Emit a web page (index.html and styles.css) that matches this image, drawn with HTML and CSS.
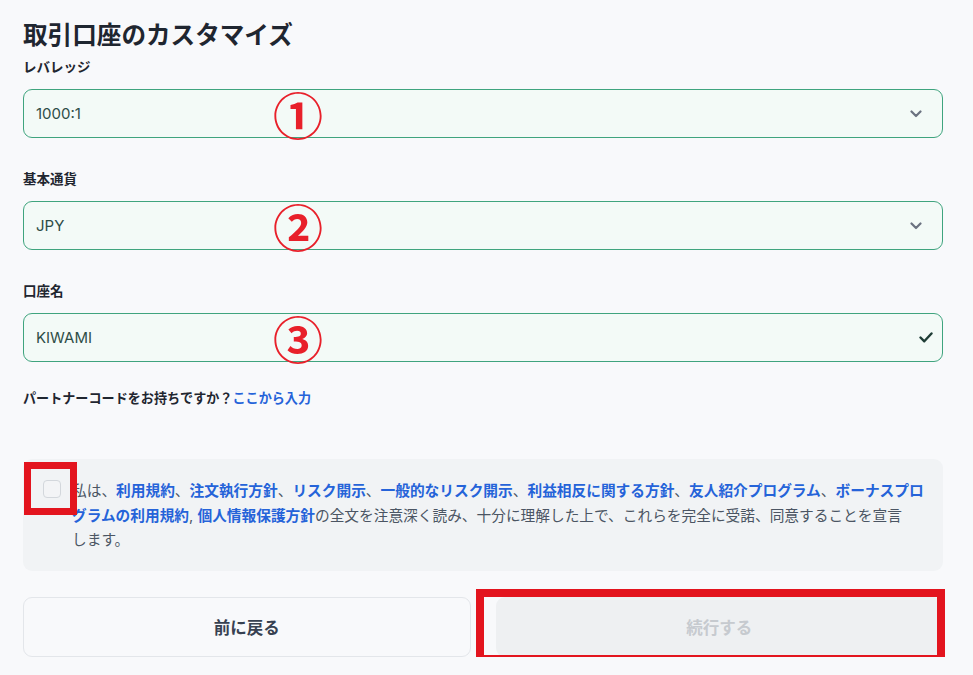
FILE: index.html
```html
<!DOCTYPE html>
<html lang="ja">
<head>
<meta charset="utf-8">
<link rel="stylesheet" href="styles.css">
</head>
<body>
<div class="page">
  <h1 class="title">取引口座のカスタマイズ</h1>

  <div class="field first">
    <div class="label">レバレッジ</div>
    <div class="input">
      <span class="value">1000:1</span>
      <span class="mark">①</span>
      <svg class="chev" width="12" height="8" viewBox="0 0 12 8"><path d="M1.5 1.5l4.5 4.5 4.5-4.5" fill="none" stroke="#6b7280" stroke-width="2.2" stroke-linecap="round" stroke-linejoin="round"/></svg>
    </div>
  </div>

  <div class="field">
    <div class="label">基本通貨</div>
    <div class="input">
      <span class="value">JPY</span>
      <span class="mark">②</span>
      <svg class="chev" width="12" height="8" viewBox="0 0 12 8"><path d="M1.5 1.5l4.5 4.5 4.5-4.5" fill="none" stroke="#6b7280" stroke-width="2.2" stroke-linecap="round" stroke-linejoin="round"/></svg>
    </div>
  </div>

  <div class="field">
    <div class="label">口座名</div>
    <div class="input">
      <span class="value">KIWAMI</span>
      <span class="mark">③</span>
      <svg class="check" width="14" height="11" viewBox="0 0 14 11"><path d="M1.5 5.5l3.8 3.8 7.2-7.8" fill="none" stroke="#1f3d36" stroke-width="2.4" stroke-linecap="round" stroke-linejoin="round"/></svg>
    </div>
  </div>

  <p class="partner">パートナーコードをお持ちですか？<a class="link">ここから入力</a></p>

  <div class="terms">
    <div class="cbwrap">
      <span class="checkbox"></span>
      <span class="annot-cb"></span>
    </div>
    <p class="terms-text">私は、<a class="link">利用規約</a>、<a class="link">注文執行方針</a>、<a class="link">リスク開示</a>、<a class="link">一般的なリスク開示</a>、<a class="link">利益相反に関する方針</a>、<a class="link">友人紹介プログラム</a>、<a class="link">ボーナスプロ<br>グラムの利用規約</a>, <a class="link">個人情報保護方針</a>の全文を注意深く読み、十分に理解した上で、これらを完全に受諾、同意することを宣言<br>します。</p>
  </div>

  <div class="actions">
    <button class="btn back">前に戻る</button>
    <div class="nextwrap">
      <button class="btn next">続行する</button>
      <span class="annot-btn"></span>
    </div>
  </div>
</div>
</body>
</html>
```

FILE: styles.css
```css
html, body {
  margin: 0;
  padding: 0;
  background: #f8f9fb;
}
body {
  font-family: Inter, "Noto Sans CJK JP", sans-serif;
  color: #1f2937;
}
.page {
  width: 920px;
  padding: 18px 30px 0 23px;
}
.title {
  margin: 0;
  font-size: 24.6px;
  line-height: 34px;
  font-weight: 700;
  color: #1f2630;
}
.field {
  margin-top: 31px;
}
.field.first {
  margin-top: 5px;
}
.label {
  font-size: 13.5px;
  line-height: 20px;
  font-weight: 700;
  color: #1f2630;
  margin-bottom: 12px;
}
.input {
  position: relative;
  height: 49px;
  box-sizing: border-box;
  border: 1.5px solid #3fa47e;
  border-radius: 9px;
  background: #f3faf7;
  display: flex;
  align-items: center;
  padding: 0 19px 0 12px;
}
.value {
  flex: 1;
  font-size: 15px;
  color: #2e4d47;
}
.mark {
  position: absolute;
  left: 249px;
  top: 50%;
  transform: translateY(-52%);
  font-size: 50px;
  line-height: 1;
  font-weight: 700;
  color: #e8202a;
  font-family: "Noto Sans CJK JP", sans-serif;
}
.chev { display: block; margin-right: 1px; }
.check { display: block; margin-right: -10px; }
.partner {
  margin: 26px 0 0;
  font-size: 13.1px;
  line-height: 20px;
  font-weight: 700;
  color: #1f2630;
}
.link {
  color: #2563d9;
  font-weight: 700;
  text-decoration: none;
}
.terms {
  margin-top: 51px;
  background: #f1f3f5;
  border-radius: 9px;
  display: flex;
  padding: 20px 12px 18px 20px;
  gap: 11px;
}
.cbwrap {
  position: relative;
  width: 18px;
  height: 18px;
  flex: none;
  margin-top: 1px;
}
.checkbox {
  display: block;
  box-sizing: border-box;
  width: 18px;
  height: 18px;
  border: 1px solid #d3d7dc;
  border-radius: 4px;
  background: #f3f4f6;
}
.annot-cb {
  position: absolute;
  left: -19px;
  top: -18px;
  width: 53px;
  height: 53px;
  box-sizing: border-box;
  border: 7px solid #e3141e;
  z-index: 2;
}
.terms-text {
  margin: 0;
  font-size: 14.7px;
  line-height: 24.5px;
  color: #4b5563;
  white-space: nowrap;
}
.actions {
  margin-top: 26px;
  display: grid;
  grid-template-columns: 1fr 1fr;
  gap: 25px;
}
.btn {
  height: 60px;
  width: 100%;
  border-radius: 9px;
  font-family: Inter, "Noto Sans CJK JP", sans-serif;
  font-size: 16.5px;
  font-weight: 700;
}
.back {
  background: #f8f9fb;
  border: 1px solid #e3e6ea;
  color: #374151;
}
.nextwrap {
  position: relative;
}
.next {
  background: #eef0f2;
  border: none;
  color: #c6cacf;
}
.annot-btn {
  position: absolute;
  left: -20px;
  top: -8px;
  width: 469px;
  height: 74px;
  box-sizing: border-box;
  border: 8px solid #e3141e;
}
```
